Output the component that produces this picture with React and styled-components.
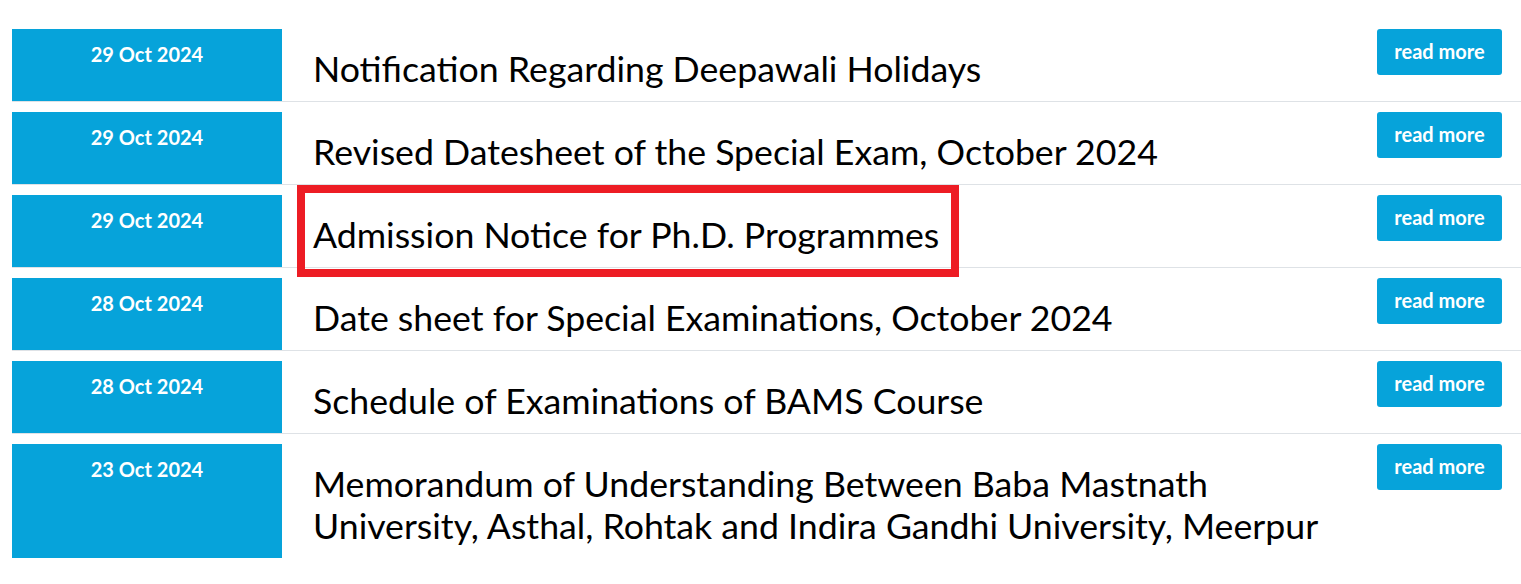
import React from "react";
import styled, { createGlobalStyle } from "styled-components";

const Global = createGlobalStyle`
  html, body { margin: 0; padding: 0; background: #fff; }
  body { font-family: Lato, "Open Sans", sans-serif; color: #000; overflow: hidden; }
`;

const List = styled.ul`
  list-style: none;
  margin: 0;
  padding: 29px 0 0 12px;
  width: 1509px;
`;

const Row = styled.li`
  display: flex;
  align-items: stretch;
  border-bottom: 1px solid #dee2e6;
  margin-bottom: 10px;
  &:last-child { border-bottom: none; }
`;

const DateBox = styled.div`
  flex: 0 0 270px;
  background: #06a3da;
  color: #fff;
  text-align: center;
  font-size: 20px;
  font-weight: 700;
  line-height: 27px;
  padding-top: 12px;
  box-sizing: border-box;
`;

const Title = styled.div`
  position: relative;
  flex: 1 1 auto;
  padding: 19px 0 11px 31px;
  font-size: 35.7px;
  line-height: 42px;
  font-weight: 400;
`;

const Highlight = styled.span`
  position: absolute;
  left: 15px;
  top: -10px;
  width: 662px;
  height: 92px;
  border: 8px solid #ed1c24;
  box-sizing: border-box;
  pointer-events: none;
`;

const ReadMore = styled.a`
  flex: 0 0 auto;
  align-self: flex-start;
  margin: 0 19px 0 40px;
  width: 125px;
  height: 46px;
  box-sizing: border-box;
  display: flex;
  align-items: center;
  justify-content: center;
  padding-bottom: 2px;
  background: #06a3da;
  color: #fff;
  border-radius: 3px;
  font-size: 20px;
  font-weight: 700;
  text-decoration: none;
`;

const items = [
  { date: "29 Oct 2024", title: "Notification Regarding Deepawali Holidays" },
  { date: "29 Oct 2024", title: "Revised Datesheet of the Special Exam, October 2024" },
  { date: "29 Oct 2024", title: "Admission Notice for Ph.D. Programmes", mark: true },
  { date: "28 Oct 2024", title: "Date sheet for Special Examinations, October 2024" },
  { date: "28 Oct 2024", title: "Schedule of Examinations of BAMS Course" },
  {
    date: "23 Oct 2024",
    title:
      "Memorandum of Understanding Between Baba Mastnath University, Asthal, Rohtak and Indira Gandhi University, Meerpur",
  },
];

export default function App() {
  return (
    <>
      <Global />
      <List>
        {items.map((it, i) => (
          <Row key={i}>
            <DateBox>{it.date}</DateBox>
            <Title>
              {it.title}
              {it.mark && <Highlight />}
            </Title>
            <ReadMore href="#">read more</ReadMore>
          </Row>
        ))}
      </List>
    </>
  );
}
